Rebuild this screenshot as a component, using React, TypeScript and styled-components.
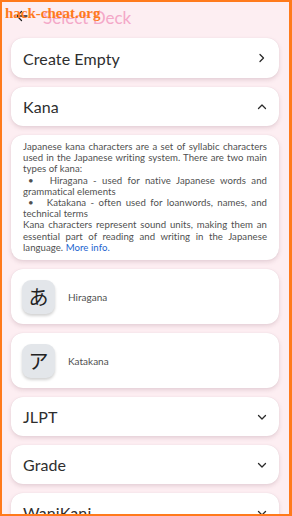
import React from "react";
import styled, { createGlobalStyle } from "styled-components";

const Global = createGlobalStyle`
  html, body { margin: 0; padding: 0; }
  body { background: #fdeef2; font-family: Lato, "Noto Sans", sans-serif; }
  * { box-sizing: border-box; }
`;

const Frame = styled.div`
  position: relative;
  width: 292px;
  height: 516px;
  overflow: hidden;
  background: #fdeef2;
  border: 2px solid #ff7a1c;
  border-right-width: 3px;
`;

const Header = styled.div`
  display: flex;
  align-items: center;
  height: 34px;
  padding: 0 0 0 13px;
  gap: 14px;
`;

const Title = styled.div`
  font-size: 17px;
  color: #f4a8c8;
  line-height: 1;
  margin-top: -4px;
`;

const BackBtn = styled.div`
  display: flex;
  width: 14px;
  height: 14px;
  margin-top: -6px;
`;

const List = styled.div`
  display: flex;
  flex-direction: column;
  gap: 9px;
  padding: 2px 10px 0 9px;
`;

const Card = styled.div<{ $h?: number }>`
  background: #ffffff;
  border-radius: 12px;
  box-shadow: 0 2px 4px rgba(120, 70, 90, 0.18), 0 0 1px rgba(120, 70, 90, 0.15);
  height: ${(p) => (p.$h ? `${p.$h}px` : "auto")};
  display: flex;
  align-items: center;
`;

const RowCard = styled(Card)`
  justify-content: space-between;
  padding: 0 12px 0 12px;
`;

const RowLabel = styled.span`
  font-size: 16px;
  color: #2e2e2e;
  letter-spacing: 0.1px;
`;

const Desc = styled(Card)`
  display: block;
  padding: 6px 12px 7px 12px;
  font-size: 9.6px;
  line-height: 11.2px;
  color: #505050;
  text-align: justify;
  letter-spacing: 0.05px;
`;

const Line = styled.div<{ $indent?: boolean }>`
  text-indent: ${(p) => (p.$indent ? "5px" : "0")};
`;

const Link = styled.span`
  color: #1d64cf;
`;

const DeckCard = styled(Card)`
  padding: 0 11px;
  gap: 13px;
`;

const Glyph = styled.div`
  width: 33px;
  height: 34px;
  border-radius: 9px;
  background: #e3e6ea;
  box-shadow: 0 2px 3px rgba(0, 0, 0, 0.18);
  display: flex;
  align-items: center;
  justify-content: center;
  font-family: "Noto Sans CJK JP", sans-serif;
  font-size: 20px;
  color: #222;
`;

const DeckLabel = styled.span`
  font-size: 10px;
  color: #505050;
`;

const Watermark = styled.div`
  position: absolute;
  left: 3px;
  top: 3px;
  font-family: "Liberation Serif", serif;
  font-weight: bold;
  font-size: 15px;
  color: #ff7a1c;
  pointer-events: none;
`;

const Chevron = ({ dir }: { dir: "right" | "up" | "down" }) => {
  const d =
    dir === "right" ? "M3 1.5 L6.5 5 L3 8.5" : dir === "up" ? "M1.5 6.5 L5 3 L8.5 6.5" : "M1.5 3.5 L5 7 L8.5 3.5";
  return (
    <svg width="10" height="10" viewBox="0 0 10 10" fill="none">
      <path d={d} stroke="#2a2a2a" strokeWidth="1.3" strokeLinecap="round" strokeLinejoin="round" />
    </svg>
  );
};

export default function App() {
  return (
    <Frame>
      <Global />
      <Header>
        <BackBtn>
          <svg width="14" height="14" viewBox="0 0 14 14" fill="none">
            <path d="M12 7 H2 M6.5 2.5 L2 7 L6.5 11.5" stroke="#222" strokeWidth="1.3" strokeLinecap="round" strokeLinejoin="round" />
          </svg>
        </BackBtn>
        <Title>Select Deck</Title>
      </Header>
      <List>
        <RowCard $h={40}>
          <RowLabel>Create Empty</RowLabel>
          <Chevron dir="right" />
        </RowCard>
        <RowCard $h={39}>
          <RowLabel>Kana</RowLabel>
          <Chevron dir="up" />
        </RowCard>
        <Desc>
          <Line>
            Japanese kana characters are a set of syllabic characters used in the Japanese writing system. There are two main types of kana:
          </Line>
          <Line $indent>• &nbsp;&nbsp;Hiragana - used for native Japanese words and grammatical elements</Line>
          <Line $indent>• &nbsp;&nbsp;Katakana - often used for loanwords, names, and technical terms</Line>
          <Line>
            Kana characters represent sound units, making them an essential part of reading and writing in the Japanese language. <Link>More info.</Link>
          </Line>
        </Desc>
        <DeckCard $h={55}>
          <Glyph>あ</Glyph>
          <DeckLabel>Hiragana</DeckLabel>
        </DeckCard>
        <DeckCard $h={55}>
          <Glyph>ア</Glyph>
          <DeckLabel>Katakana</DeckLabel>
        </DeckCard>
        <RowCard $h={39}>
          <RowLabel>JLPT</RowLabel>
          <Chevron dir="down" />
        </RowCard>
        <RowCard $h={39}>
          <RowLabel>Grade</RowLabel>
          <Chevron dir="down" />
        </RowCard>
        <RowCard $h={39}>
          <RowLabel>WaniKani</RowLabel>
          <Chevron dir="down" />
        </RowCard>
      </List>
      <Watermark>hack-cheat.org</Watermark>
    </Frame>
  );
}
